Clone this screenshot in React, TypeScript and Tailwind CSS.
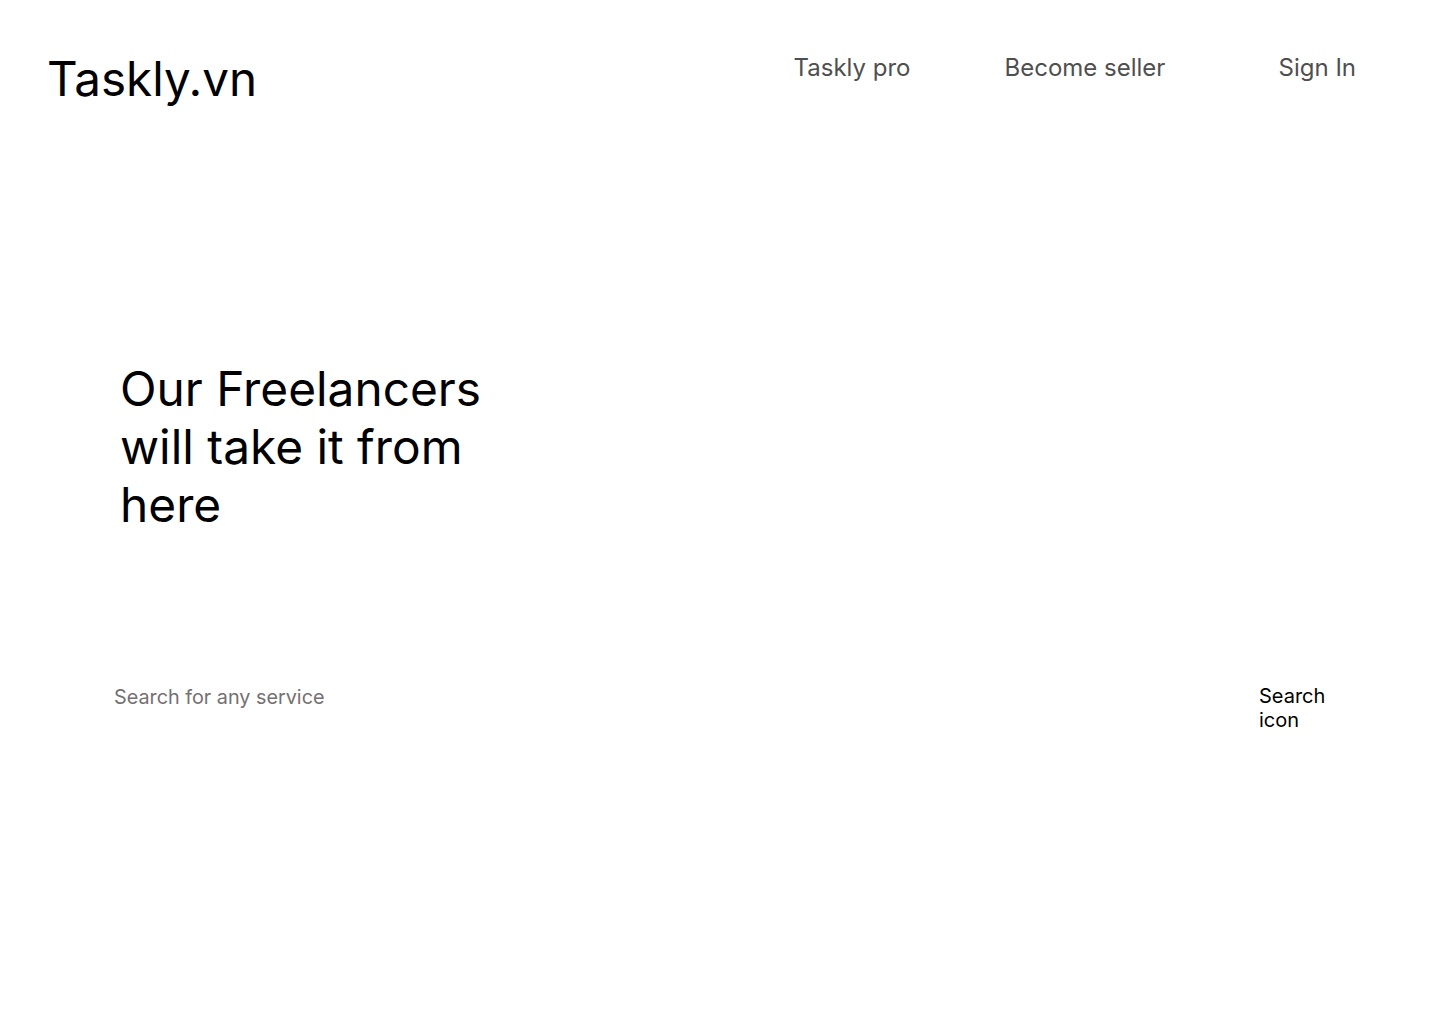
export default function App() {
  return (
    <div className="w-[1440px] h-[1024px] bg-white text-black" style={{ fontFamily: "Inter, 'Noto Sans', sans-serif" }}>
      <header className="flex items-start justify-between pl-[47px] pr-[84px] pt-[50px]">
        <div className="text-[47.6px] leading-[58px] text-black">Taskly.vn</div>
        <nav className="flex items-center pt-[3px] text-[24px] leading-[30px] text-[#4f4f4f]">
          <a className="w-[211px]">Taskly pro</a>
          <a className="w-[274px]">Become seller</a>
          <a>Sign In</a>
        </nav>
      </header>
      <section className="pl-[120px] pt-[252px]">
        <h1 className="w-[400px] text-[47.8px] leading-[58px] font-normal">Our Freelancers will take it from here</h1>
      </section>
      <div className="flex items-start justify-between pl-[114px] pr-[101px] pt-[150px]">
        <div className="pt-[1px] text-[19.8px] leading-[24px] text-[#757071]">Search for any service</div>
        <div className="w-[80px] text-[20px] leading-[24px] text-black">Search icon</div>
      </div>
    </div>
  );
}
